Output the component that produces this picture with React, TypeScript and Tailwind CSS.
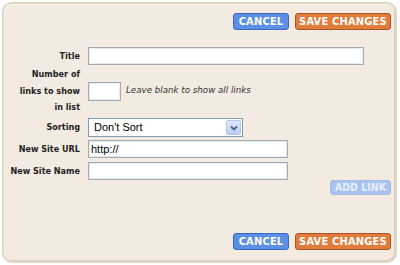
import React from "react";

const btnBase =
  "h-[17px] rounded-[3px] border text-[11px] font-bold leading-none text-white flex items-center justify-center tracking-[0.2px]";

function Buttons() {
  return (
    <div className="flex justify-end gap-[6px]">
      <div
        className={`${btnBase} w-[56px] bg-[#5b90e6] border-[#3a6ac0] text-[#eef4ff]`}
        style={{ fontFamily: '"DejaVu Sans Condensed", "DejaVu Sans", sans-serif' }}
      >
        CANCEL
      </div>
      <div
        className={`${btnBase} w-[96px] bg-[#e27c3a] border-[#a4562a] text-[#fde9d8]`}
        style={{ fontFamily: '"DejaVu Sans Condensed", "DejaVu Sans", sans-serif' }}
      >
        SAVE CHANGES
      </div>
    </div>
  );
}

const label =
  "w-[76px] shrink-0 text-right text-[9px] font-bold text-[#222] leading-[16.5px] pr-0";
const input =
  "bg-white border border-[#a5acb5] shadow-[inset_0_0_0_1px_#e8ebee]";

export default function App() {
  const labelFont = { fontFamily: '"DejaVu Sans Condensed", "DejaVu Sans", sans-serif' };
  return (
    <div className="w-[400px] h-[265px] bg-white pl-[2px] pt-[2px] pr-[3px] pb-[2px]">
      <div className="h-full rounded-[10px] border-2 border-[#e0d6c4] bg-[#f3ebe2] flex flex-col pt-[9px] pr-[4px] pb-[11px] shadow-[inset_1px_1px_0_#fbf7f1,inset_-1px_-1px_0_#d9ceb9]">
        <Buttons />
        <div className="flex items-center h-[18px] mt-[17px]">
          <div className={label} style={labelFont}>Title</div>
          <div className={`${input} ml-[8px] w-[276px] h-[18px]`} />
        </div>
        <div className="flex items-center h-[50px] mt-[1px]">
          <div className={label} style={labelFont}>
            Number of
            <br />
            links to show
            <br />
            in list
          </div>
          <div className={`${input} ml-[8px] w-[33px] h-[19px]`} />
          <div
            className="ml-[5px] text-[8.7px] italic text-[#333]"
            style={{ fontFamily: '"DejaVu Sans", sans-serif' }}
          >
            Leave blank to show all links
          </div>
        </div>
        <div className="flex items-center h-[19px] mt-[2px]">
          <div className={label} style={labelFont}>Sorting</div>
          <div className="ml-[8px] w-[155px] h-[19px] bg-white border border-[#7f9db9] flex items-center">
            <span
              className="flex-1 pl-[5px] text-[11px] text-black"
              style={{ fontFamily: '"Liberation Sans", Arial, sans-serif' }}
            >
              Don't Sort
            </span>
            <div className="w-[15px] h-[15px] mr-[1px] rounded-[2px] border border-[#b4c8ef] bg-gradient-to-b from-[#dfe9fd] to-[#b9cdf4] flex items-center justify-center">
              <svg width="8" height="6" viewBox="0 0 8 6">
                <path d="M1 1.5 L4 4.5 L7 1.5" stroke="#4d6185" strokeWidth="1.8" fill="none" />
              </svg>
            </div>
          </div>
        </div>
        <div className="flex items-center h-[18px] mt-[3px]">
          <div className={label} style={labelFont}>New Site URL</div>
          <div className={`${input} ml-[8px] w-[200px] h-[18px] flex items-center`}>
            <span
              className="pl-[2px] text-[11px] text-black"
              style={{ fontFamily: '"Liberation Sans", Arial, sans-serif' }}
            >
              http://
            </span>
          </div>
        </div>
        <div className="flex items-center h-[18px] mt-[4px]">
          <div className={label} style={labelFont}>New Site Name</div>
          <div className={`${input} ml-[8px] w-[200px] h-[18px]`} />
        </div>
        <div className="flex justify-end">
          <div
            className="h-[15px] w-[61px] rounded-[3px] bg-[#a9c2ee] border border-[#a3bbe8] text-[#e8f0ff] text-[10.5px] font-bold flex items-center justify-center"
            style={labelFont}
          >
            ADD LINK
          </div>
        </div>
        <div className="mt-auto">
          <Buttons />
        </div>
      </div>
    </div>
  );
}
